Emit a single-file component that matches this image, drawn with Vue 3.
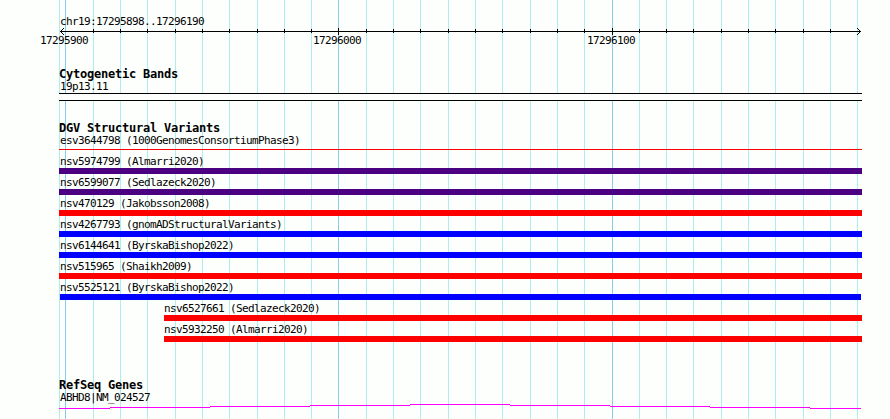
<script setup>
const minor = [59, 93, 120, 147, 175, 202, 229, 257, 284, 311, 366, 393, 420, 448, 475, 502, 530, 557, 584, 639, 666, 693, 721, 748, 775, 803, 830, 857]
const major = [65, 338, 612]
const ticks = minor.slice(1, -1)
const positions = [
  { x: 40, text: '17295900' },
  { x: 313, text: '17296000' },
  { x: 587, text: '17296100' },
]
const variants = [
  { name: 'nsv5974799 (Almarri2020)', color: 'indigo', left: 0, right: 0 },
  { name: 'nsv6599077 (Sedlazeck2020)', color: 'indigo', left: 0, right: 0 },
  { name: 'nsv470129 (Jakobsson2008)', color: 'red', left: 0, right: 0 },
  { name: 'nsv4267793 (gnomADStructuralVariants)', color: 'blue', left: 0, right: 0 },
  { name: 'nsv6144641 (ByrskaBishop2022)', color: 'blue', left: 0, right: 0 },
  { name: 'nsv515965 (Shaikh2009)', color: 'red', left: 0, right: 0 },
  { name: 'nsv5525121 (ByrskaBishop2022)', color: 'blue', left: 1, right: 1 },
  { name: 'nsv6527661 (Sedlazeck2020)', color: 'red', left: 105, right: 0 },
  { name: 'nsv5932250 (Almarri2020)', color: 'red', left: 105, right: 0 },
]
</script>

<template>
  <main class="browser">
    <svg class="grid" width="890" height="419" shape-rendering="crispEdges">
      <rect v-for="x in minor" :key="x" class="minor" :x="x" y="0" width="1" height="419" />
      <rect v-for="x in major" :key="x" class="major" :x="x" y="0" width="1" height="419" />
    </svg>

    <div class="tracks">
      <section class="ruler">
        <div class="label">chr19:17295898..17296190</div>
        <svg class="axis" width="890" height="20" viewBox="0 27 890 20" shape-rendering="crispEdges">
          <rect x="60" y="31" width="801" height="1" />
          <rect v-for="x in ticks" :key="x" :x="x" y="29" width="1" height="4" />
          <rect v-for="x in major.slice(1)" :key="x" :x="x" y="28" width="1" height="7" />
          <path d="M61 30h1v1h-1zM62 29h1v1h-1zM63 28h1v1h-1zM61 32h1v1h-1zM62 33h1v1h-1zM63 34h1v1h-1z" />
          <path d="M859 30h1v1h-1zM858 29h1v1h-1zM857 28h1v1h-1zM859 32h1v1h-1zM858 33h1v1h-1zM857 34h1v1h-1z" />
          <text v-for="p in positions" :key="p.x" :x="p.x" y="44">{{ p.text }}</text>
        </svg>
      </section>

      <section class="bands">
        <h2>Cytogenetic Bands</h2>
        <div class="label">19p13.11</div>
        <div class="band"></div>
      </section>

      <section class="variants">
        <h2>DGV Structural Variants</h2>
        <div class="label">esv3644798 (1000GenomesConsortiumPhase3)</div>
        <div class="thin"></div>
        <div
          v-for="v in variants"
          :key="v.name"
          class="variant"
          :style="{ marginLeft: v.left + 'px', marginRight: v.right + 'px' }"
        >
          <div class="label" :class="{ flush: v.left > 0 }">{{ v.name }}</div>
          <div class="bar" :class="v.color"></div>
        </div>
      </section>

      <section class="genes">
        <h2>RefSeq Genes</h2>
        <div class="label">ABHD8|NM_024527</div>
        <svg class="gene" width="803" height="6" viewBox="59 403 803 6" shape-rendering="crispEdges">
          <path d="M59 408h51v1h-51zM110 407h100v1h-100zM210 406h100v1h-100zM310 405h100v1h-100zM410 404h100v1h-100zM510 405h100v1h-100zM610 406h100v1h-100zM710 407h100v1h-100zM810 408h51v1h-51z" />
        </svg>
      </section>
    </div>
  </main>
</template>

<style>
body {
  margin: 0;
  background: #fdfffc;
}
</style>

<style scoped>
.browser {
  display: grid;
  width: 890px;
  height: 419px;
  overflow: hidden;
  background: #fdfffc;
  color: #000;
  font: 11px/12px "DejaVu Sans Mono", "Liberation Mono", monospace;
  letter-spacing: -0.622px;
}
.grid,
.tracks {
  grid-area: 1 / 1;
}
.grid {
  display: block;
}
.minor {
  fill: #afeeee;
}
.major {
  fill: #87ceeb;
}
.tracks {
  width: 803px;
  padding: 15px 28px 0 59px;
  isolation: isolate;
}
.label {
  height: 12px;
  padding-left: 1px;
  line-height: 14px;
  white-space: pre;
}
.label.flush {
  padding-left: 0;
}
h2 {
  margin: 0;
  height: 12px;
  font-size: 12px;
  line-height: 12px;
  font-weight: bold;
  letter-spacing: -0.224px;
  white-space: pre;
}
.axis {
  display: block;
  margin-left: -59px;
}
.bands {
  padding-top: 21px;
}
.band {
  height: 6px;
  margin-top: 1px;
  border-top: 1px solid #000;
  border-bottom: 1px solid #000;
  background: #fdfffc;
}
.variants {
  padding-top: 21px;
}
.thin {
  height: 1px;
  margin: 3px 0 5px;
  background: #f00;
}
.variant {
  height: 21px;
}
.bar {
  height: 6px;
  margin-top: 1px;
}
.indigo {
  background: #4b0082;
}
.red {
  background: #f00;
}
.blue {
  background: #00f;
}
.genes {
  padding-top: 35px;
}
.gene {
  display: block;
  fill: #f0f;
}
</style>
